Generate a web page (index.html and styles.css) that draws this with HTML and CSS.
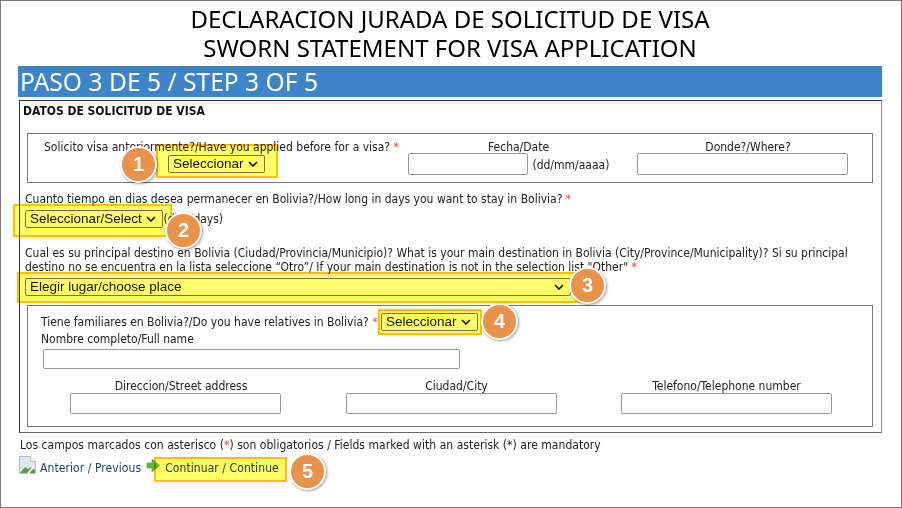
FILE: index.html
```html
<!DOCTYPE html>
<html lang="es">
<head>
  <meta charset="UTF-8">
  <meta name="viewport" content="width=device-width, initial-scale=1.0">
  <title>Declaracion jurada de solicitud de visa</title>
  <link rel="stylesheet" href="styles.css">
</head>
<body>
  <div class="page">
    <h1>DECLARACION JURADA DE SOLICITUD DE VISA<br>SWORN STATEMENT FOR VISA APPLICATION</h1>
    <div class="step-bar">PASO 3 DE 5 / STEP 3 OF 5</div>

    <div class="form-box">
      <div class="form-title">DATOS DE SOLICITUD DE VISA</div>

      <!-- visa anterior -->
      <div class="group group-before">
        <div class="cell cell-applied">
          <div>Solicito visa anteriormente?/Have you applied before for a visa? <span class="req">*</span></div>
          <span class="marked mark-1">
            <select class="sel-short"><option>Seleccionar</option></select>
            <span class="badge badge-1">1</span>
          </span>
        </div>
        <div class="cell cell-date">
          <div class="date-label">Fecha/Date</div>
          <input type="text" class="input-date"> (dd/mm/aaaa)
        </div>
        <div class="cell cell-where">
          <div class="label-off">Donde?/Where?</div>
          <input type="text" class="input-where">
        </div>
      </div>

      <!-- dias -->
      <div class="question q-days">
        <div>Cuanto tiempo en dias desea permanecer en Bolivia?/How long in days you want to stay in Bolivia? <span class="req">*</span></div>
        <span class="marked mark-2">
          <select class="sel-days"><option>Seleccionar/Select</option></select>
          <span class="badge badge-2">2</span>
        </span>
        (dias/days)
      </div>

      <!-- destino -->
      <div class="question q-place">
        <div class="place-text">Cual es su principal destino en Bolivia (Ciudad/Provincia/Municipio)? What is your main destination in Bolivia (City/Province/Municipality)? Si su principal<br>destino no se encuentra en la lista seleccione “Otro”/ If your main destination is not in the selection list "Other" <span class="req">*</span></div>
        <span class="marked mark-3">
          <select class="sel-place"><option>Elegir lugar/choose place</option></select>
          <span class="badge badge-3">3</span>
        </span>
      </div>

      <!-- familiares -->
      <div class="group group-family">
        <div class="family-top">
          Tiene familiares en Bolivia?/Do you have relatives in Bolivia? <span class="req">*</span>
          <span class="marked mark-4">
            <select class="sel-short"><option>Seleccionar</option></select>
            <span class="badge badge-4">4</span>
          </span>
        </div>
        <div class="name-label">Nombre completo/Full name</div>
        <input type="text" class="input-name">
        <div class="family-row">
          <div class="family-cell">
            <div class="label-off">Direccion/Street address</div>
            <input type="text" class="input-family">
          </div>
          <div class="family-cell">
            <div class="label-off">Ciudad/City</div>
            <input type="text" class="input-family">
          </div>
          <div class="family-cell">
            <div>Telefono/Telephone number</div>
            <input type="text" class="input-family">
          </div>
        </div>
      </div>
    </div>

    <p class="note">Los campos marcados con asterisco (<span class="req">*</span>) son obligatorios / Fields marked with an asterisk (*) are mandatory</p>

    <div class="nav">
      <svg class="icon-broken" width="17" height="18" viewBox="0 0 17 18">
        <path d="M.5.500h11l5 5v12H.5z" fill="#dfe9f6" stroke="#b4bcc8"/>
        <path d="M11.500.500v5h5" fill="#fff" stroke="#b4bcc8"/>
        <path d="M1 17l5-6 3 2 3-2 4 3v3z" fill="#5a9e3c"/>
        <path d="M9 17.500l6-7.500" stroke="#fff" stroke-width="2"/>
      </svg>
      <a href="#" class="link">Anterior / Previous</a>
      <svg class="icon-next" width="14" height="14" viewBox="0 0 14 14">
        <path d="M1 4h5V0l7.500 6.500L6 13V9H1z" fill="#66b83c" stroke="#4a9a2a" stroke-width=".6"/>
      </svg>
      <span class="marked mark-5">
        <a href="#" class="link">Continuar / Continue</a>
        <span class="badge badge-5">5</span>
      </span>
    </div>
  </div>
</body>
</html>
```

FILE: styles.css
```css
* {
  box-sizing: border-box;
}
html, body {
  margin: 0;
  height: 100%;
}
body {
  font-family: "DejaVu Sans Condensed", "Noto Sans", sans-serif;
  font-size: 12px;
  color: #222;
}
.page {
  width: 902px;
  height: 508px;
  border: 1px solid #777;
  padding: 3px 19px 0 17px;
  overflow: hidden;
}
h1 {
  margin: 0;
  font-family: "Noto Sans", sans-serif;
  font-size: 24px;
  font-weight: normal;
  line-height: 29px;
  color: #000;
  text-align: center;
}
.step-bar {
  height: 31px;
  margin-top: 4px;
  padding-left: 2px;
  background: #3d85c6;
  color: #fff;
  font-family: "Noto Sans", sans-serif;
  font-size: 24.6px;
  line-height: 31px;
}
.form-box {
  height: 333px;
  margin: 3px 0 0 1px;
  padding: 2px 8px 0 3px;
  border: 1px solid #333;
  border-right-color: #888;
  border-bottom-color: #666;
}
.form-title {
  font-weight: bold;
  color: #111;
  line-height: 16px;
}
.group {
  margin-left: 4px;
  border: 1px solid #777;
}
.group-before {
  display: grid;
  grid-template-columns: 380px 229px 211px;
  height: 50px;
  margin-top: 14px;
  text-align: center;
}
.cell {
  padding-top: 5px;
  line-height: 16px;
}
.cell-applied {
  padding-left: 16px;
  text-align: left;
}
.cell-applied .marked {
  margin: 0 0 0 124px;
}
.cell-date {
  text-align: left;
}
.date-label {
  padding-left: 80px;
}
.label-off {
  padding-left: 11px;
}
.cell-date input,
.cell-where input {
  margin-top: -2px;
}
.input-date {
  width: 120px;
  margin-right: 1px;
}
.input-where {
  width: 211px;
}
input {
  height: 22px;
  border: 1px solid #999;
  border-radius: 2px;
  background: #fff;
  vertical-align: middle;
}
select {
  appearance: none;
  display: block;
  height: 18px;
  padding: 0 0 0 4px;
  border: 1px solid #767676;
  border-radius: 2px;
  background: #fff url("data:image/svg+xml,%3Csvg xmlns='http://www.w3.org/2000/svg' width='10' height='6'%3E%3Cpath d='M1 1l4 4 4-4' fill='none' stroke='%23111' stroke-width='1.6'/%3E%3C/svg%3E") no-repeat right 6px center;
  color: #111;
  font-family: "Liberation Sans", sans-serif;
  font-size: 13.5px;
  line-height: 16px;
}
.req {
  color: #f44;
}
.question {
  line-height: 16px;
}
.q-days {
  margin: 8px 0 0 2px;
}
.q-place {
  margin: 18px 0 0 2px;
}
.place-text {
  line-height: 14px;
}
.sel-short {
  width: 97px;
}
.sel-days {
  width: 138px;
}
.sel-place {
  width: 546px;
}
.group-family {
  height: 122px;
  margin-top: 9px;
  padding: 7px 0 0 13px;
  line-height: 16px;
}
.family-top .marked {
  vertical-align: middle;
}
.input-name {
  display: block;
  width: 417px;
  height: 20px;
  margin: 2px 0 0 2px;
}
.family-row {
  display: flex;
  margin: 10px 0 0 29px;
  gap: 64.5px;
}
.family-cell {
  width: 211px;
  line-height: 14px;
  text-align: center;
}
.input-family {
  width: 211px;
  height: 21px;
}
.note {
  margin: 4px 0 0 2px;
  line-height: 16px;
  letter-spacing: .04px;
}
.nav {
  display: flex;
  align-items: center;
  margin: 5px 0 0 2px;
  height: 20px;
}
.link {
  color: #1c3f6e;
  text-decoration: none;
  letter-spacing: .08px;
}
.icon-broken {
  margin: 0 4px 6px -1px;
}
.icon-next {
  margin: -4px 5px 0 5px;
}

/* anotaciones encima del formulario */
.marked {
  position: relative;
  display: inline-block;
}
.mark-2 {
  margin: 3px -3px 0 0;
}
.mark-3 {
  margin-top: 4px;
}
.marked::before {
  content: "";
  box-sizing: border-box;
  position: absolute;
  z-index: 2;
  background: #ffff66;
  border: 2px solid #ffc000;
  mix-blend-mode: multiply;
}
.mark-1::before {
  left: -12px;
  top: -11px;
  width: 122px;
  height: 34px;
}
.mark-2::before {
  left: -12px;
  top: -6px;
  width: 159px;
  height: 33px;
}
.mark-3::before {
  left: -8px;
  top: -6px;
  width: 565px;
  height: 31px;
}
.mark-4::before {
  left: -3px;
  top: -4px;
  width: 104px;
  height: 26px;
}
.mark-5::before {
  left: -11px;
  top: -4px;
  width: 133px;
  height: 25px;
}
.badge {
  position: absolute;
  z-index: 3;
  width: 37px;
  height: 37px;
  border-radius: 50%;
  border: 2px solid #fff;
  background: #e8924a;
  box-shadow: 1px 1px 3px rgba(0, 0, 0, .4);
  color: #fff;
  font-family: "Liberation Sans", sans-serif;
  font-size: 20px;
  font-weight: bold;
  line-height: 33px;
  text-align: center;
}
.badge-1 {
  left: -48px;
  top: -9px;
}
.badge-2 {
  left: 140px;
  top: 2px;
}
.badge-3 {
  left: 544px;
  top: -11px;
}
.badge-4 {
  left: 100px;
  top: -10px;
}
.badge-5 {
  left: 124px;
  top: -8px;
}
```
